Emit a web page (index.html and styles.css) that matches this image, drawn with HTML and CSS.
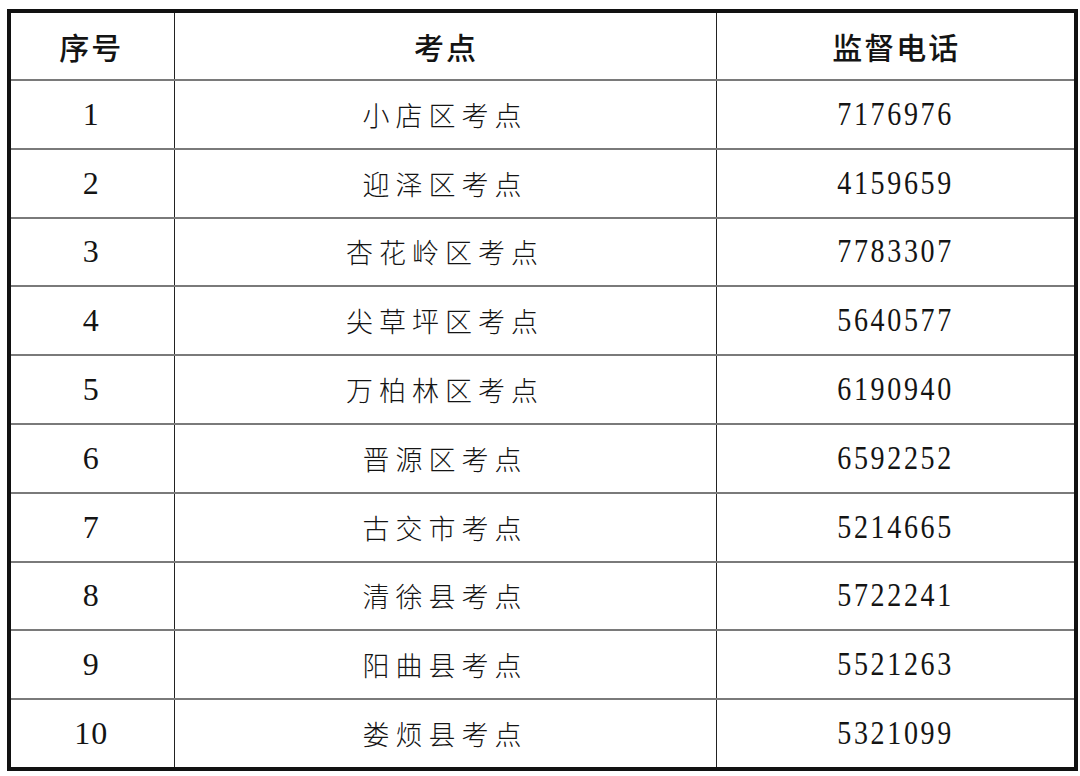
FILE: index.html
```html
<!DOCTYPE html>
<html lang="zh-CN">
<head>
<meta charset="utf-8">
<link rel="stylesheet" href="styles.css">
</head>
<body>
<table class="tbl">
  <colgroup><col class="c1"><col class="c2"><col class="c3"></colgroup>
  <thead>
    <tr class="head"><th>序号</th><th>考点</th><th>监督电话</th></tr>
  </thead>
  <tbody>
    <tr><td class="num">1</td><td class="name">小店区考点</td><td class="num"><span class="tel">7176976</span></td></tr>
    <tr><td class="num">2</td><td class="name">迎泽区考点</td><td class="num"><span class="tel">4159659</span></td></tr>
    <tr><td class="num">3</td><td class="name">杏花岭区考点</td><td class="num"><span class="tel">7783307</span></td></tr>
    <tr><td class="num">4</td><td class="name">尖草坪区考点</td><td class="num"><span class="tel">5640577</span></td></tr>
    <tr><td class="num">5</td><td class="name">万柏林区考点</td><td class="num"><span class="tel">6190940</span></td></tr>
    <tr><td class="num">6</td><td class="name">晋源区考点</td><td class="num"><span class="tel">6592252</span></td></tr>
    <tr><td class="num">7</td><td class="name">古交市考点</td><td class="num"><span class="tel">5214665</span></td></tr>
    <tr><td class="num">8</td><td class="name">清徐县考点</td><td class="num"><span class="tel">5722241</span></td></tr>
    <tr><td class="num">9</td><td class="name">阳曲县考点</td><td class="num"><span class="tel">5521263</span></td></tr>
    <tr><td class="num">10</td><td class="name">娄烦县考点</td><td class="num"><span class="tel">5321099</span></td></tr>
  </tbody>
</table>
</body>
</html>
```
FILE: styles.css
```css
html, body {
  margin: 0;
  padding: 0;
  background: #ffffff;
}
body {
  padding: 9px 0 0 7px;
}
.tbl {
  border-collapse: collapse;
  table-layout: fixed;
  width: 1071px;
  border: 4px solid #111111;
  color: #141414;
}
.c1 { width: 165px; }
.c2 { width: 542px; }
.c3 { width: auto; }
.tbl th, .tbl td {
  border-left: 1px solid #222222;
  border-right: 1px solid #222222;
  border-top: 2px solid #7a7a7a;
  border-bottom: 2px solid #7a7a7a;
  text-align: center;
  vertical-align: middle;
  padding: 0;
}
.head th {
  height: 66px;
  font-family: "Noto Sans CJK SC", sans-serif;
  font-weight: 500;
  font-size: 30px;
  letter-spacing: 2px;
  padding-left: 2px;
}
.head th:first-child {
  padding-right: 4px;
}
.tbl td {
  height: 66.8px;
}
.name {
  font-family: "Noto Sans CJK SC", sans-serif;
  font-weight: 300;
  font-size: 27px;
  letter-spacing: 6px;
  padding-left: 6px;
}
.num {
  font-family: "Liberation Serif", serif;
  font-size: 32px;
  letter-spacing: 1px;
}
.tbl td.num:first-child {
  padding-right: 2px;
}
.tel {
  display: inline-block;
  font-size: 33px;
  letter-spacing: 3.1px;
  transform: scaleX(0.85);
}
```
